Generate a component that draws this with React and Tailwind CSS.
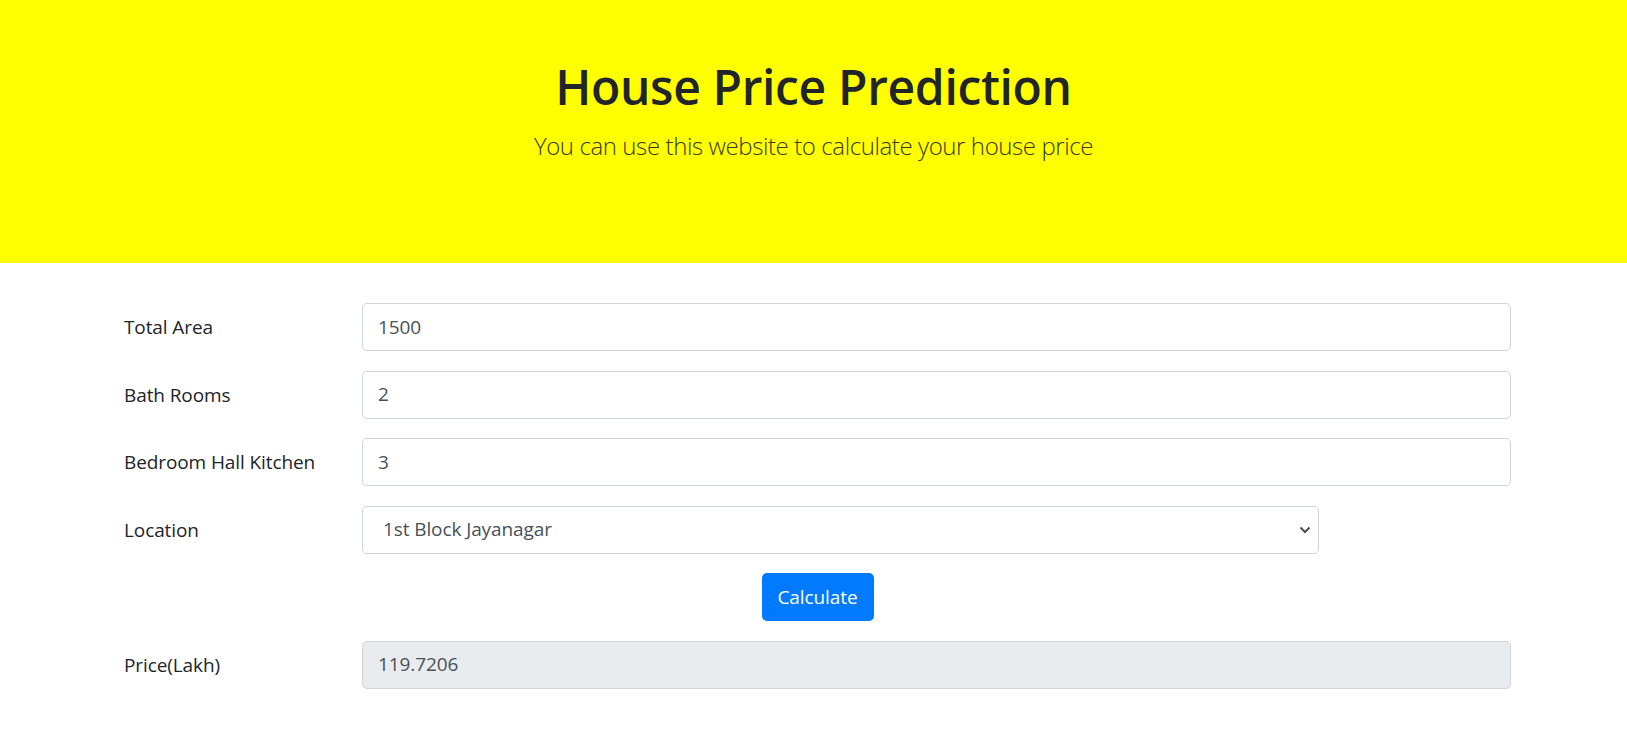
import React from "react";

const font = { fontFamily: '"Open Sans", "Noto Sans", sans-serif' };

function Row({ label, children }) {
  return (
    <div className="flex items-center">
      <label className="w-[238px] shrink-0 text-[19px] tracking-[-0.1px] leading-[30px] text-[#212529]">{label}</label>
      <div className="flex-1">{children}</div>
    </div>
  );
}

function Input({ value, disabled }) {
  return (
    <div
      className={`h-[48px] w-full rounded-[5px] border border-[#ced4da] px-[15px] flex items-center text-[19px] tracking-[-0.1px] text-[#495057] ${
        disabled ? "bg-[#e9ecef]" : "bg-white"
      }`}
    >
      {value}
    </div>
  );
}

export default function App() {
  return (
    <div className="min-h-[750px] bg-white" style={font}>
      <header className="h-[263px] bg-[#ffff00] text-center pt-[57px]">
        <h1 className="text-[48px] leading-[60px] font-semibold tracking-[-0.35px] text-[#212529] mb-[10px]">
          House Price Prediction
        </h1>
        <p className="text-[24px] leading-[37.5px] font-light tracking-[-0.4px] text-[#3a3a1c]">
          You can use this website to calculate your house price
        </p>
      </header>
      <div className="ml-[124px] w-[1387px] pt-[40px] flex flex-col gap-[19.5px]">
        <Row label="Total Area">
          <Input value="1500" />
        </Row>
        <Row label="Bath Rooms">
          <Input value="2" />
        </Row>
        <Row label="Bedroom Hall Kitchen">
          <Input value="3" />
        </Row>
        <Row label="Location">
          <div className="h-[48px] w-[957px] rounded-[5px] border border-[#ced4da] bg-white pl-[20px] pr-[6px] flex items-center justify-between text-[19px] tracking-[-0.1px] text-[#495057]">
            <span>1st Block Jayanagar</span>
            <svg width="12" height="8" viewBox="0 0 12 8" className="mr-[1px]">
              <path d="M1.5 1.5 L6 6 L10.5 1.5" fill="none" stroke="#495057" strokeWidth="2" />
            </svg>
          </div>
        </Row>
        <div className="flex justify-center">
          <button className="h-[48px] w-[112px] rounded-[5px] bg-[#007bff] text-white text-[19px] tracking-[-0.1px]">
            Calculate
          </button>
        </div>
        <Row label="Price(Lakh)">
          <Input value="119.7206" disabled />
        </Row>
      </div>
    </div>
  );
}
